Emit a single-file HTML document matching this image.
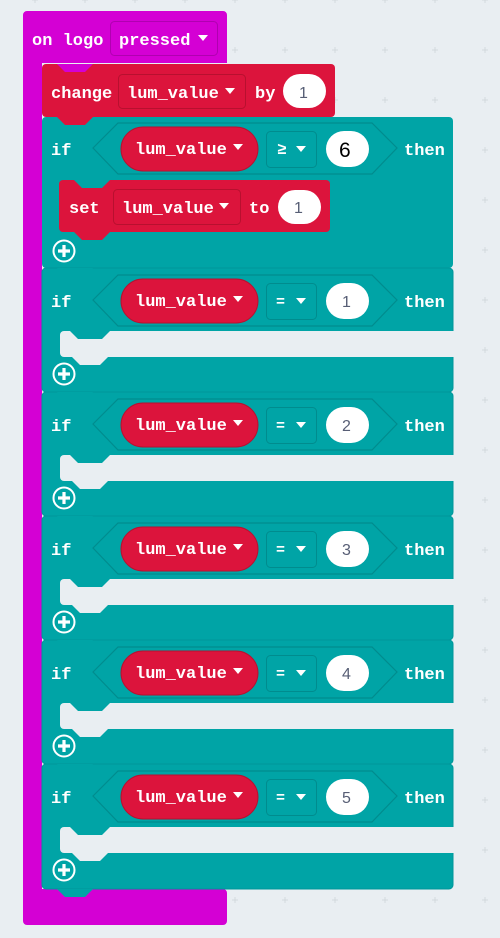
<!DOCTYPE html>
<html><head><meta charset="utf-8"><style>
html,body{margin:0;padding:0;background:#e9eef2;width:500px;height:938px;overflow:hidden}
svg{display:block}
text{font-family:"Liberation Mono",monospace;font-weight:bold;font-size:17px;fill:#fff}
.n{font-family:"Liberation Sans",sans-serif;font-weight:normal;font-size:16px;fill:#575e75}
</style></head><body>
<svg width="500" height="938" viewBox="0 0 500 938" xmlns="http://www.w3.org/2000/svg">
<defs>
<pattern id="g" x="0" y="0" width="50" height="50" patternUnits="userSpaceOnUse">
<path d="M35 -3V3M32 0H38M35 47V53M32 50H38" stroke="#d3d9dd" stroke-width="1"/>
</pattern>
<g id="plus"><circle cx="0" cy="0" r="10.5" fill="none" stroke="#fff" stroke-width="2"/><path d="M-6 0H6M0 -6V6" stroke="#fff" stroke-width="3.2"/></g>
<g id="hdr">
<polygon points="93,31 118,6 372,6 397,31 372,57 118,57" fill="#00a4a6" stroke="#008c8e" stroke-width="1.2"/>
<rect x="121" y="10" width="137" height="44" rx="22" fill="#dc143c" stroke="#b8102f" stroke-width="1"/>
<text x="135" y="37">lum_value</text>
<path d="M233 27h10l-5 6z" fill="#fff"/>
<rect x="266.5" y="14.5" width="50" height="36" rx="4" fill="#00a4a6" stroke="#008c8e"/>
<path d="M296 29h10l-5 6z" fill="#fff"/>
<rect x="326" y="14" width="43" height="36" rx="18" fill="#fff"/>
<text x="51" y="38">if</text>
<text x="404" y="38">then</text>
</g>
</defs>
<rect width="500" height="938" fill="#e9eef2"/>
<rect width="500" height="938" fill="url(#g)"/>

<!-- purple hat -->
<path d="M27 11H223a4 4 0 0 1 4 4V63H42V889H223a4 4 0 0 1 4 4V921a4 4 0 0 1-4 4H27a4 4 0 0 1-4-4V15a4 4 0 0 1 4-4z" fill="#d400d4"/>

<!-- if blocks (teal) -->
<g>
<rect x="42" y="117" width="411" height="151" rx="4" fill="#00a4a6"/>
<rect x="42" y="268" width="411" height="124" rx="4" fill="#00a4a6" stroke="#00969a" stroke-width="1"/>
<rect x="42" y="392" width="411" height="124" rx="4" fill="#00a4a6" stroke="#00969a" stroke-width="1"/>
<rect x="42" y="516" width="411" height="124" rx="4" fill="#00a4a6" stroke="#00969a" stroke-width="1"/>
<rect x="42" y="640" width="411" height="124" rx="4" fill="#00a4a6" stroke="#00969a" stroke-width="1"/>
<rect x="42" y="764" width="411" height="125" rx="4" fill="#00a4a6" stroke="#00969a" stroke-width="1"/>
<polygon points="57,889 65,897 85,897 93,889" fill="#00a4a6"/>
</g>

<!-- slots -->
<g fill="#e9eef2">
<path d="M64 331H460V357H64a4 4 0 0 1-4-4V335a4 4 0 0 1 4-4z"/><polygon points="72,357 80,365 100,365 108,357"/>
<path d="M64 455H460V481H64a4 4 0 0 1-4-4V459a4 4 0 0 1 4-4z"/><polygon points="72,481 80,489 100,489 108,481"/>
<path d="M64 579H460V605H64a4 4 0 0 1-4-4V583a4 4 0 0 1 4-4z"/><polygon points="72,605 80,613 100,613 108,605"/>
<path d="M64 703H460V729H64a4 4 0 0 1-4-4V707a4 4 0 0 1 4-4z"/><polygon points="72,729 80,737 100,737 108,729"/>
<path d="M64 827H460V853H64a4 4 0 0 1-4-4V831a4 4 0 0 1 4-4z"/><polygon points="72,853 80,861 100,861 108,853"/>
</g>
<g fill="#00a4a6">
<polygon points="70,331 78,339 102,339 110,331"/>
<polygon points="70,455 78,463 102,463 110,455"/>
<polygon points="70,579 78,587 102,587 110,579"/>
<polygon points="70,703 78,711 102,711 110,703"/>
<polygon points="70,827 78,835 102,835 110,827"/>
<!-- tabs between if blocks -->
<polygon points="57,392 65,400 85,400 93,392"/>
<polygon points="57,516 65,524 85,524 93,516"/>
<polygon points="57,640 65,648 85,648 93,640"/>
<polygon points="57,764 65,772 85,772 93,764"/>
<polygon points="57,268 65,276 85,276 93,268"/>
</g>

<!-- headers -->
<g transform="translate(0,117)"><use href="#hdr"/><text x="277" y="37" style="font-size:16px">≥</text><text class="n" x="339" y="40" style="fill:#000;font-size:21px">6</text></g>
<g transform="translate(0,269)"><use href="#hdr"/><text x="276" y="37" style="font-size:15px">=</text><text class="n" x="342" y="38">1</text></g>
<g transform="translate(0,393)"><use href="#hdr"/><text x="276" y="37" style="font-size:15px">=</text><text class="n" x="342" y="38">2</text></g>
<g transform="translate(0,517)"><use href="#hdr"/><text x="276" y="37" style="font-size:15px">=</text><text class="n" x="342" y="38">3</text></g>
<g transform="translate(0,641)"><use href="#hdr"/><text x="276" y="37" style="font-size:15px">=</text><text class="n" x="342" y="38">4</text></g>
<g transform="translate(0,765)"><use href="#hdr"/><text x="276" y="37" style="font-size:15px">=</text><text class="n" x="342" y="38">5</text></g>

<!-- plus icons -->
<use href="#plus" x="64" y="251"/>
<use href="#plus" x="64" y="374"/>
<use href="#plus" x="64" y="498"/>
<use href="#plus" x="64" y="622"/>
<use href="#plus" x="64" y="746"/>
<use href="#plus" x="64" y="870"/>

<!-- set block -->
<rect x="59" y="180" width="271" height="52" rx="4" fill="#dc143c"/>
<polygon points="74,232 82,240 102,240 110,232" fill="#dc143c"/>
<polygon points="74,180 82,188 102,188 110,180" fill="#00a4a6"/>
<text x="69" y="213">set</text>
<rect x="113.5" y="189.5" width="127" height="35" rx="4" fill="#dc143c" stroke="#b8102f"/>
<text x="122" y="213">lum_value</text>
<path d="M219 203h10l-5 6z" fill="#fff"/>
<text x="249" y="213">to</text>
<rect x="278" y="190" width="43" height="34" rx="17" fill="#fff"/>
<text class="n" x="294" y="213">1</text>

<!-- change block -->
<rect x="42" y="64" width="293" height="53" rx="4" fill="#dc143c"/>
<polygon points="57,117 65,125 85,125 93,117" fill="#dc143c"/>
<polygon points="57,64 65,72 85,72 93,64" fill="#d400d4"/>
<text x="51" y="98">change</text>
<rect x="118.5" y="74.5" width="127" height="34" rx="4" fill="#dc143c" stroke="#b8102f"/>
<text x="127" y="98">lum_value</text>
<path d="M225 88h10l-5 6z" fill="#fff"/>
<text x="255" y="98">by</text>
<rect x="283" y="74" width="43" height="34" rx="17" fill="#fff"/>
<text class="n" x="299" y="98">1</text>

<!-- hat contents -->
<text x="32" y="45">on logo</text>
<rect x="110.5" y="21.5" width="107" height="34" rx="4" fill="#d400d4" stroke="#b000b0"/>
<text x="119" y="45">pressed</text>
<path d="M198 35h10l-5 6z" fill="#fff"/>
</svg>
</body></html>
